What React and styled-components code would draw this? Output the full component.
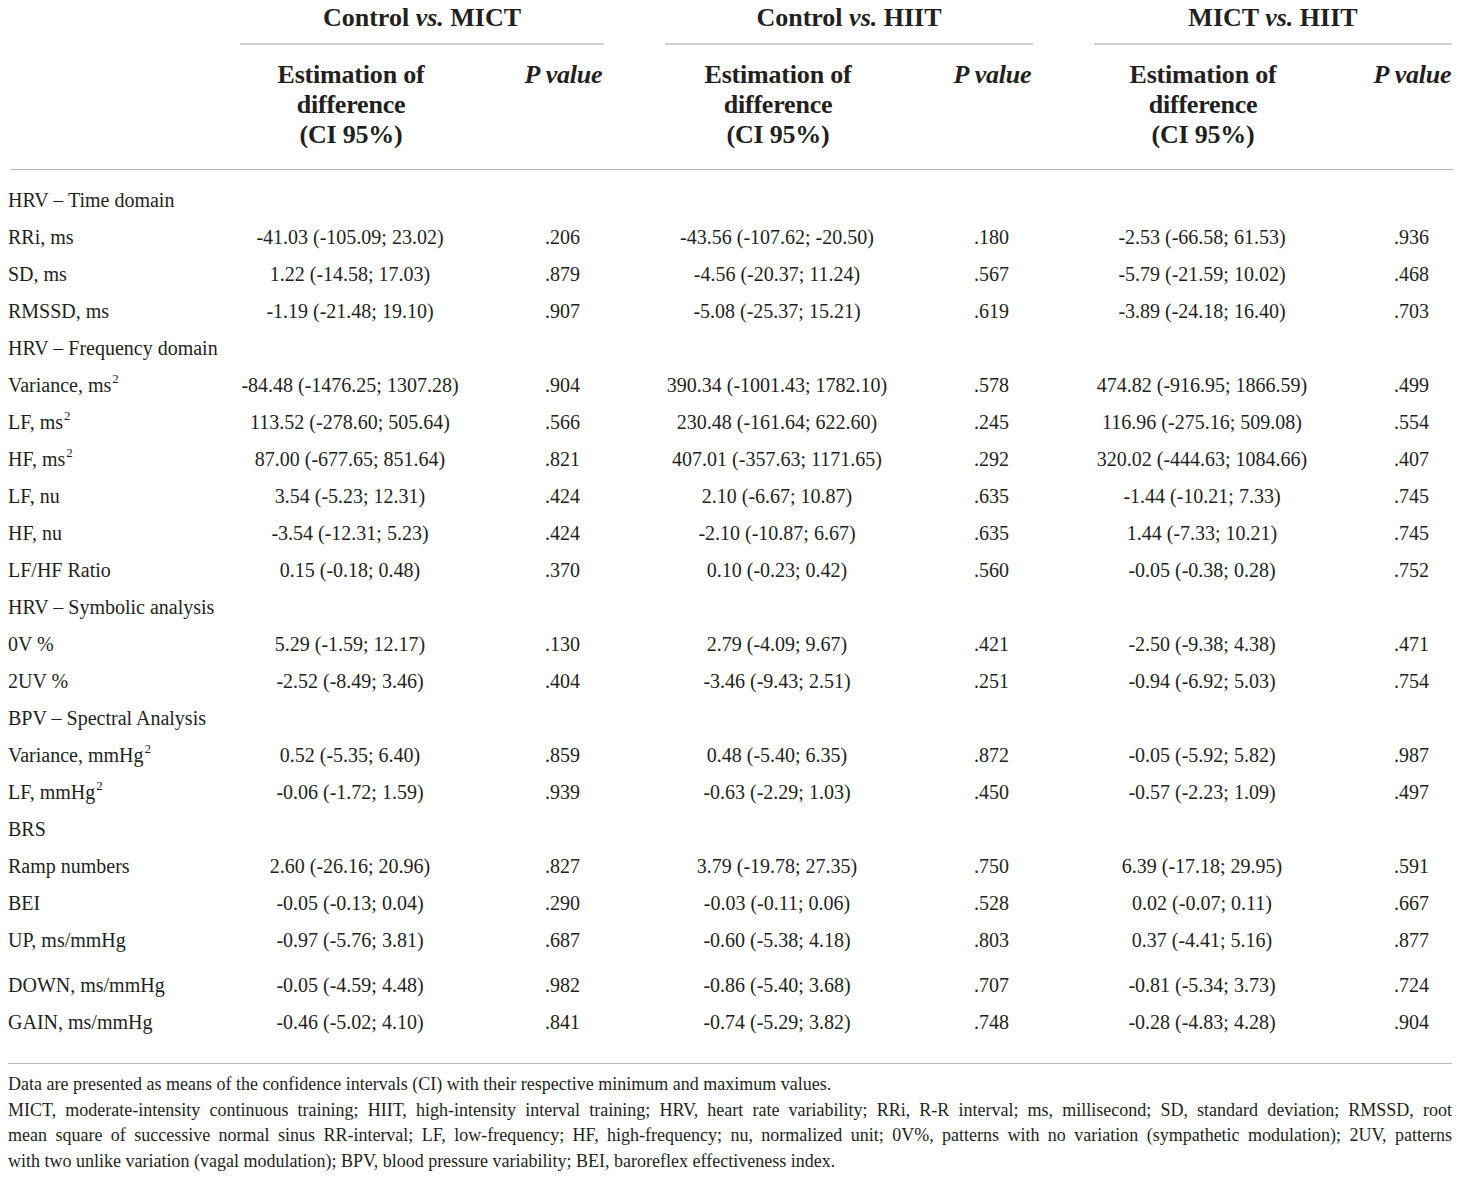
import React from "react";
import styled, { createGlobalStyle } from "styled-components";

const Global = createGlobalStyle`
  body {
    margin: 0;
    background: #fff;
    color: #231f20;
    font-family: "Liberation Serif", "Times New Roman", serif;
  }
`;

const groups = [
  ["Control", "MICT"],
  ["Control", "HIIT"],
  ["MICT", "HIIT"],
];

const rows = [
  { section: "HRV – Time domain" },
  { label: "RRi, ms", v: ["-41.03 (-105.09; 23.02)", ".206", "-43.56 (-107.62; -20.50)", ".180", "-2.53 (-66.58; 61.53)", ".936"] },
  { label: "SD, ms", v: ["1.22 (-14.58; 17.03)", ".879", "-4.56 (-20.37; 11.24)", ".567", "-5.79 (-21.59; 10.02)", ".468"] },
  { label: "RMSSD, ms", v: ["-1.19 (-21.48; 19.10)", ".907", "-5.08 (-25.37; 15.21)", ".619", "-3.89 (-24.18; 16.40)", ".703"] },
  { section: "HRV – Frequency domain" },
  { label: "Variance, ms", sup: true, v: ["-84.48 (-1476.25; 1307.28)", ".904", "390.34 (-1001.43; 1782.10)", ".578", "474.82 (-916.95; 1866.59)", ".499"] },
  { label: "LF, ms", sup: true, v: ["113.52 (-278.60; 505.64)", ".566", "230.48 (-161.64; 622.60)", ".245", "116.96 (-275.16; 509.08)", ".554"] },
  { label: "HF, ms", sup: true, v: ["87.00 (-677.65; 851.64)", ".821", "407.01 (-357.63; 1171.65)", ".292", "320.02 (-444.63; 1084.66)", ".407"] },
  { label: "LF, nu", v: ["3.54 (-5.23; 12.31)", ".424", "2.10 (-6.67; 10.87)", ".635", "-1.44 (-10.21; 7.33)", ".745"] },
  { label: "HF, nu", v: ["-3.54 (-12.31; 5.23)", ".424", "-2.10 (-10.87; 6.67)", ".635", "1.44 (-7.33; 10.21)", ".745"] },
  { label: "LF/HF Ratio", v: ["0.15 (-0.18; 0.48)", ".370", "0.10 (-0.23; 0.42)", ".560", "-0.05 (-0.38; 0.28)", ".752"] },
  { section: "HRV – Symbolic analysis" },
  { label: "0V %", v: ["5.29 (-1.59; 12.17)", ".130", "2.79 (-4.09; 9.67)", ".421", "-2.50 (-9.38; 4.38)", ".471"] },
  { label: "2UV %", v: ["-2.52 (-8.49; 3.46)", ".404", "-3.46 (-9.43; 2.51)", ".251", "-0.94 (-6.92; 5.03)", ".754"] },
  { section: "BPV – Spectral Analysis" },
  { label: "Variance, mmHg", sup: true, v: ["0.52 (-5.35; 6.40)", ".859", "0.48 (-5.40; 6.35)", ".872", "-0.05 (-5.92; 5.82)", ".987"] },
  { label: "LF, mmHg", sup: true, v: ["-0.06 (-1.72; 1.59)", ".939", "-0.63 (-2.29; 1.03)", ".450", "-0.57 (-2.23; 1.09)", ".497"] },
  { section: "BRS" },
  { label: "Ramp numbers", v: ["2.60 (-26.16; 20.96)", ".827", "3.79 (-19.78; 27.35)", ".750", "6.39 (-17.18; 29.95)", ".591"] },
  { label: "BEI", v: ["-0.05 (-0.13; 0.04)", ".290", "-0.03 (-0.11; 0.06)", ".528", "0.02 (-0.07; 0.11)", ".667"] },
  { label: "UP, ms/mmHg", v: ["-0.97 (-5.76; 3.81)", ".687", "-0.60 (-5.38; 4.18)", ".803", "0.37 (-4.41; 5.16)", ".877"] },
  { label: "DOWN, ms/mmHg", spaced: true, v: ["-0.05 (-4.59; 4.48)", ".982", "-0.86 (-5.40; 3.68)", ".707", "-0.81 (-5.34; 3.73)", ".724"] },
  { label: "GAIN, ms/mmHg", v: ["-0.46 (-5.02; 4.10)", ".841", "-0.74 (-5.29; 3.82)", ".748", "-0.28 (-4.83; 4.28)", ".904"] },
];

const Page = styled.div`
  width: 1444px;
  padding: 3px 8px 20px;
`;

const Grid = styled.div`
  display: grid;
  grid-template-columns: 232px 220px 205px 224px 205px 216px 142px;
  align-items: center;
`;

const TitleRow = styled(Grid)``;

const GroupCell = styled.div`
  grid-column: span 2;
  padding-right: ${(p) => (p.$last ? 0 : 61)}px;
`;

const GroupTitle = styled.div`
  font-size: 26px;
  font-weight: bold;
  line-height: 30px;
  text-align: center;
  padding-bottom: 10px;
  border-bottom: 2px solid #d0d0d0;
`;

const HeadRow = styled(Grid)`
  align-items: start;
  margin-top: 15px;
  padding-bottom: 19px;
  border-bottom: 1px solid #b8b8b8;
  margin-left: 2px;
  margin-right: -2px;
  & > * { margin-left: -2px; }
`;

const HeadCell = styled.div`
  font-size: 26px;
  font-weight: bold;
  line-height: 30px;
  text-align: center;
  letter-spacing: -0.2px;
`;

const PHead = styled(HeadCell)`
  font-style: italic;
  padding-left: 61px;
  padding-right: ${(p) => (p.$last ? 0 : 61)}px;
`;

const Body = styled.div`
  padding-top: 12px;
  padding-bottom: 22px;
  border-bottom: 1px solid #b8b8b8;
`;

const Row = styled(Grid)`
  height: 37px;
  font-size: 20px;
  margin-top: ${(p) => (p.$spaced ? 8 : 0)}px;
`;

const Label = styled.div`
  white-space: nowrap;
  sup {
    font-size: 13px;
    vertical-align: 9px;
    line-height: 0;
    margin-left: 1px;
  }
`;

const Section = styled(Label)`
  grid-column: 1 / -1;
`;

const Est = styled.div`
  text-align: center;
  white-space: nowrap;
`;

const PVal = styled.div`
  text-align: center;
  padding-left: 61px;
  padding-right: ${(p) => (p.$last ? 0 : 61)}px;
`;

const Notes = styled.div`
  padding-top: 8px;
  font-size: 18px;
  line-height: 25.7px;
`;

const NoteLine = styled.div`
  white-space: nowrap;
  text-align: ${(p) => (p.$full ? "justify" : "left")};
  text-align-last: ${(p) => (p.$full ? "justify" : "auto")};
`;

export default function App() {
  return (
    <Page>
      <Global />
      <TitleRow>
        <div />
        {groups.map(([a, b], i) => (
          <GroupCell key={i} $last={i === 2}>
            <GroupTitle>
              {a} <i>vs.</i> {b}
            </GroupTitle>
          </GroupCell>
        ))}
      </TitleRow>

      <HeadRow>
        <div />
        {groups.map((_, i) => (
          <React.Fragment key={i}>
            <HeadCell>
              Estimation of
              <br />
              difference
              <br />
              (CI 95%)
            </HeadCell>
            <PHead $last={i === 2}>P value</PHead>
          </React.Fragment>
        ))}
      </HeadRow>

      <Body>
        {rows.map((r, i) =>
          r.section ? (
            <Row key={i}>
              <Section>{r.section}</Section>
            </Row>
          ) : (
            <Row key={i} $spaced={r.spaced}>
              <Label>
                {r.label}
                {r.sup && <sup>2</sup>}
              </Label>
              {r.v.map((val, j) =>
                j % 2 === 0 ? (
                  <Est key={j}>{val}</Est>
                ) : (
                  <PVal key={j} $last={j === 5}>
                    {val}
                  </PVal>
                )
              )}
            </Row>
          )
        )}
      </Body>

      <Notes>
        <NoteLine>
          Data are presented as means of the confidence intervals (CI) with their respective minimum and maximum values.
        </NoteLine>
        <NoteLine $full>
          MICT, moderate-intensity continuous training; HIIT, high-intensity interval training; HRV, heart rate variability; RRi, R-R interval; ms, millisecond; SD, standard deviation; RMSSD, root
        </NoteLine>
        <NoteLine $full>
          mean square of successive normal sinus RR-interval; LF, low-frequency; HF, high-frequency; nu, normalized unit; 0V%, patterns with no variation (sympathetic modulation); 2UV, patterns
        </NoteLine>
        <NoteLine>
          with two unlike variation (vagal modulation); BPV, blood pressure variability; BEI, baroreflex effectiveness index.
        </NoteLine>
      </Notes>
    </Page>
  );
}
